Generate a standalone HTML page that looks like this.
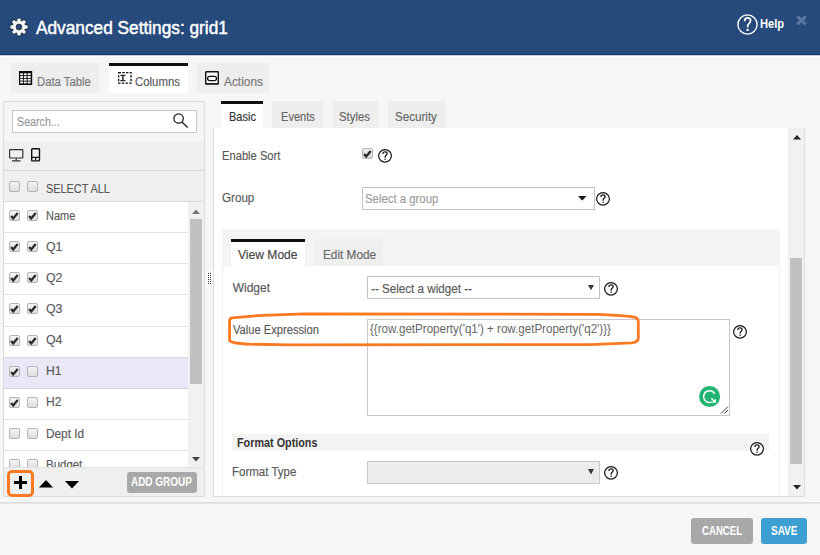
<!DOCTYPE html>
<html><head><meta charset="utf-8">
<style>
*{box-sizing:border-box;margin:0;padding:0}
html,body{width:820px;height:555px;overflow:hidden;background:#f6f6f6;font-family:"Liberation Sans",sans-serif;position:relative}
div{position:absolute}
.t{white-space:pre;-webkit-text-stroke:0.15px currentColor;transform-origin:0 0}
.tab{background:#eeeeee}
.tab.act{background:#fff;border-top:3px solid #111}
.cb{width:11px;height:11px;border:1px solid #b4b4b4;border-radius:2px;background:linear-gradient(#f4f4f4,#dedede)}
.row{left:4px;width:184px;height:31px;background:#fff;border-bottom:1px solid #e3e3e3}
svg{position:absolute;overflow:visible}

</style></head><body>
<!-- header -->
<div style="left:0;top:0;width:820px;height:54px;background:#264a7b"></div>
<div style="left:0;top:54px;width:820px;height:1px;background:#12366b"></div>
<div style="left:0;top:55px;width:820px;height:1px;background:#c9cfd8"></div>
<div style="left:0;top:56px;width:820px;height:1px;background:#fff"></div>
<!-- gear -->
<svg style="left:8.3px;top:17px" width="22" height="20" viewBox="0 0 22 20">
<g transform="translate(11,10)">
<g fill="#1c2a3c" stroke="#1c2a3c" stroke-width="1.4"><circle r="6.2"/><rect x="-1.7" y="-8.6" width="3.4" height="4" rx="1" transform="rotate(0)"/><rect x="-1.7" y="-8.6" width="3.4" height="4" rx="1" transform="rotate(45)"/><rect x="-1.7" y="-8.6" width="3.4" height="4" rx="1" transform="rotate(90)"/><rect x="-1.7" y="-8.6" width="3.4" height="4" rx="1" transform="rotate(135)"/><rect x="-1.7" y="-8.6" width="3.4" height="4" rx="1" transform="rotate(180)"/><rect x="-1.7" y="-8.6" width="3.4" height="4" rx="1" transform="rotate(225)"/><rect x="-1.7" y="-8.6" width="3.4" height="4" rx="1" transform="rotate(270)"/><rect x="-1.7" y="-8.6" width="3.4" height="4" rx="1" transform="rotate(315)"/></g>
<g fill="#fafafa"><circle r="6.2"/><rect x="-1.7" y="-8.6" width="3.4" height="4" rx="1" transform="rotate(0)"/><rect x="-1.7" y="-8.6" width="3.4" height="4" rx="1" transform="rotate(45)"/><rect x="-1.7" y="-8.6" width="3.4" height="4" rx="1" transform="rotate(90)"/><rect x="-1.7" y="-8.6" width="3.4" height="4" rx="1" transform="rotate(135)"/><rect x="-1.7" y="-8.6" width="3.4" height="4" rx="1" transform="rotate(180)"/><rect x="-1.7" y="-8.6" width="3.4" height="4" rx="1" transform="rotate(225)"/><rect x="-1.7" y="-8.6" width="3.4" height="4" rx="1" transform="rotate(270)"/><rect x="-1.7" y="-8.6" width="3.4" height="4" rx="1" transform="rotate(315)"/></g>
<circle r="2.9" fill="#264a7b" stroke="#333" stroke-width="0.9"/>
</g></svg>
<!-- help circle -->
<svg style="left:736.5px;top:13.5px" width="21" height="21" viewBox="0 0 21 21">
<circle cx="10.5" cy="10.5" r="9.6" fill="none" stroke="#fff" stroke-width="1.4"/>
<path d="M7.6 7.3C7.6 5.1 8.9 3.9 10.6 3.9C12.4 3.9 13.6 5.1 13.6 6.8C13.6 8.8 11 9.6 10.7 11.6L10.6 13.4" fill="none" stroke="#fff" stroke-width="1.7"/>
<circle cx="10.6" cy="15.9" r="1.2" fill="#fff"/>
</svg>
<!-- close x -->
<svg style="left:796px;top:15.4px" width="11" height="11" viewBox="0 0 11 11">
<path d="M1.3 1.3L9.7 9.4M9.7 1.3L1.3 9.4" stroke="#5a76a1" stroke-width="3" stroke-linecap="butt"/>
</svg>

<!-- top tabs -->
<div class="tab" style="left:11px;top:63px;width:88px;height:30px"></div>
<div class="tab act" style="left:109px;top:63px;width:79px;height:30px"></div>
<div class="tab" style="left:197px;top:63px;width:72px;height:30px"></div>
<!-- data table icon -->
<svg style="left:19px;top:71px" width="13.2" height="14" viewBox="0 0 13.2 14">
<rect x="0" y="0" width="13.2" height="14" fill="#0a0a0a"/>
<g fill="#fff"><rect x="1.2" y="2.3" width="2.7" height="1.85"/><rect x="4.85" y="2.3" width="2.8" height="1.85"/><rect x="8.6" y="2.3" width="3.1" height="1.85"/><rect x="1.2" y="5.05" width="2.7" height="1.85"/><rect x="4.85" y="5.05" width="2.8" height="1.85"/><rect x="8.6" y="5.05" width="3.1" height="1.85"/><rect x="1.2" y="7.8" width="2.7" height="1.85"/><rect x="4.85" y="7.8" width="2.8" height="1.85"/><rect x="8.6" y="7.8" width="3.1" height="1.85"/><rect x="1.2" y="10.55" width="2.7" height="1.85"/><rect x="4.85" y="10.55" width="2.8" height="1.85"/><rect x="8.6" y="10.55" width="3.1" height="1.85"/></g></svg>
<!-- columns icon -->
<svg style="left:117.6px;top:72px" width="14" height="12" viewBox="0 0 14 12">
<rect x="0.65" y="0.65" width="12.4" height="10.4" fill="none" stroke="#111" stroke-width="1.3" stroke-dasharray="2.4 1.3"/>
<path d="M2.4 3.3H7.4M2.4 8.6H7.4" stroke="#222" stroke-width="1.3" fill="none"/>
<path d="M4.9 3.3V8.6" stroke="#333" stroke-width="1.6" fill="none"/>
</svg>
<!-- actions icon -->
<svg style="left:205px;top:71px" width="14" height="14" viewBox="0 0 14 14">
<rect x="0.7" y="0.7" width="12.6" height="12.4" rx="0.6" fill="#fafafa" stroke="#111" stroke-width="1.4"/>
<path d="M0.7 12.6H13.3" stroke="#222" stroke-width="1.2"/>
<rect x="2.6" y="5.3" width="8.9" height="4.3" rx="2.1" fill="#fff" stroke="#111" stroke-width="1.25"/>
</svg>

<!-- left panel -->
<div style="left:3px;top:101px;width:202px;height:396px;border:1px solid #dcdcdc;background:#f5f5f5"></div>
<div style="left:12px;top:110px;width:185px;height:23px;background:#fff;border:1px solid #c8c8c8"></div>
<svg style="left:173px;top:113.4px" width="16" height="16" viewBox="0 0 16 16">
<circle cx="5.6" cy="5.5" r="4.7" fill="none" stroke="#222" stroke-width="1.3"/>
<path d="M8.9 8.9L14.6 14.5" stroke="#222" stroke-width="1.4"/>
</svg>
<div style="left:4px;top:141px;width:200px;height:30px;background:#efefef;border-bottom:1px solid #dcdcdc"></div>
<!-- monitor -->
<svg style="left:9px;top:148.8px" width="14.4" height="12.5" viewBox="0 0 14.4 12.5">
<rect x="0.6" y="0.6" width="13.2" height="8.4" rx="0.5" fill="none" stroke="#333" stroke-width="1.2"/>
<path d="M7.2 9V11.2M3 11.8H11.4" stroke="#333" stroke-width="1.2"/>
</svg>
<!-- phone -->
<svg style="left:31px;top:147.8px" width="9.2" height="13.6" viewBox="0 0 9.2 13.6">
<rect x="0.7" y="0.7" width="7.8" height="12.2" rx="0.6" fill="none" stroke="#111" stroke-width="1.4"/>
<path d="M0.7 9.4H8.5M4.6 9.4V12.6" stroke="#111" stroke-width="1.2"/>
</svg>
<div style="left:4px;top:171px;width:200px;height:31px;background:#efefef;border-bottom:1px solid #d8d8d8"></div>
<div class="cb" style="left:9px;top:180.5px"></div>
<div class="cb" style="left:27.3px;top:180.5px"></div>

<!-- list -->
<div class="row" style="top:202px;height:31px"></div>
<div class="row" style="top:233px;height:31px"></div>
<div class="row" style="top:264px;height:31px"></div>
<div class="row" style="top:295px;height:32px"></div>
<div class="row" style="top:327px;height:31px;border-bottom-color:#dcdce4"></div>
<div class="row" style="top:358px;height:31px;background:#e8e8f6;border-bottom-color:#d6d6e2"></div>
<div class="row" style="top:389px;height:31px"></div>
<div class="row" style="top:420px;height:31px"></div>
<div class="row" style="top:451px;height:16px;border-bottom:none"></div>
<div class="cb" style="left:9px;top:210px"></div>
<svg style="left:9px;top:210px" width="11" height="11" viewBox="0 0 11 11"><path d="M2.1 6.1L4.2 8.5L8.7 3" stroke="#2a2a2a" stroke-width="2.3" fill="none"/></svg>
<div class="cb" style="left:27.3px;top:210px"></div>
<svg style="left:27.3px;top:210px" width="11" height="11" viewBox="0 0 11 11"><path d="M2.1 6.1L4.2 8.5L8.7 3" stroke="#2a2a2a" stroke-width="2.3" fill="none"/></svg>
<div class="cb" style="left:9px;top:241px"></div>
<svg style="left:9px;top:241px" width="11" height="11" viewBox="0 0 11 11"><path d="M2.1 6.1L4.2 8.5L8.7 3" stroke="#2a2a2a" stroke-width="2.3" fill="none"/></svg>
<div class="cb" style="left:27.3px;top:241px"></div>
<svg style="left:27.3px;top:241px" width="11" height="11" viewBox="0 0 11 11"><path d="M2.1 6.1L4.2 8.5L8.7 3" stroke="#2a2a2a" stroke-width="2.3" fill="none"/></svg>
<div class="cb" style="left:9px;top:272px"></div>
<svg style="left:9px;top:272px" width="11" height="11" viewBox="0 0 11 11"><path d="M2.1 6.1L4.2 8.5L8.7 3" stroke="#2a2a2a" stroke-width="2.3" fill="none"/></svg>
<div class="cb" style="left:27.3px;top:272px"></div>
<svg style="left:27.3px;top:272px" width="11" height="11" viewBox="0 0 11 11"><path d="M2.1 6.1L4.2 8.5L8.7 3" stroke="#2a2a2a" stroke-width="2.3" fill="none"/></svg>
<div class="cb" style="left:9px;top:303px"></div>
<svg style="left:9px;top:303px" width="11" height="11" viewBox="0 0 11 11"><path d="M2.1 6.1L4.2 8.5L8.7 3" stroke="#2a2a2a" stroke-width="2.3" fill="none"/></svg>
<div class="cb" style="left:27.3px;top:303px"></div>
<svg style="left:27.3px;top:303px" width="11" height="11" viewBox="0 0 11 11"><path d="M2.1 6.1L4.2 8.5L8.7 3" stroke="#2a2a2a" stroke-width="2.3" fill="none"/></svg>
<div class="cb" style="left:9px;top:335px"></div>
<svg style="left:9px;top:335px" width="11" height="11" viewBox="0 0 11 11"><path d="M2.1 6.1L4.2 8.5L8.7 3" stroke="#2a2a2a" stroke-width="2.3" fill="none"/></svg>
<div class="cb" style="left:27.3px;top:335px"></div>
<svg style="left:27.3px;top:335px" width="11" height="11" viewBox="0 0 11 11"><path d="M2.1 6.1L4.2 8.5L8.7 3" stroke="#2a2a2a" stroke-width="2.3" fill="none"/></svg>
<div class="cb" style="left:9px;top:366px"></div>
<svg style="left:9px;top:366px" width="11" height="11" viewBox="0 0 11 11"><path d="M2.1 6.1L4.2 8.5L8.7 3" stroke="#2a2a2a" stroke-width="2.3" fill="none"/></svg>
<div class="cb" style="left:27.3px;top:366px"></div>
<div class="cb" style="left:9px;top:397px"></div>
<svg style="left:9px;top:397px" width="11" height="11" viewBox="0 0 11 11"><path d="M2.1 6.1L4.2 8.5L8.7 3" stroke="#2a2a2a" stroke-width="2.3" fill="none"/></svg>
<div class="cb" style="left:27.3px;top:397px"></div>
<div class="cb" style="left:9px;top:428px"></div>
<div class="cb" style="left:27.3px;top:428px"></div>
<div class="cb" style="left:9px;top:459px"></div>
<div class="cb" style="left:27.3px;top:459px"></div>
<!-- list scrollbar -->
<div style="left:188px;top:202px;width:16px;height:265px;background:#f1f1f1"></div>
<svg style="left:192px;top:208.5px" width="8" height="5" viewBox="0 0 8 5"><path d="M0 5L4 0.5L8 5Z" fill="#777"/></svg>
<div style="left:190px;top:219px;width:12px;height:165px;background:#c1c1c1"></div>
<svg style="left:192px;top:456.5px" width="8" height="5" viewBox="0 0 8 5"><path d="M0 0L4 4.5L8 0Z" fill="#444"/></svg>
<!-- bottom bar -->
<div style="z-index:5;left:4px;top:467px;width:200px;height:29px;background:#efefef;border-top:1px solid #e2e2e2"></div>
<div style="z-index:5;left:7px;top:469.5px;width:27px;height:27.5px;border:3px solid #fb7a21;border-radius:5px"></div>
<svg style="z-index:5;left:13.5px;top:476px" width="13" height="13" viewBox="0 0 13 13"><path d="M6.5 0V13M0 6.5H13" stroke="#000" stroke-width="3"/></svg>
<svg style="z-index:5;left:39px;top:480px" width="14" height="7.5" viewBox="0 0 14 7.5"><path d="M0 7.5L7 0L14 7.5Z" fill="#000"/></svg>
<svg style="z-index:5;left:65px;top:480.5px" width="14" height="7.5" viewBox="0 0 14 7.5"><path d="M0 0L7 7.5L14 0Z" fill="#000"/></svg>
<div style="z-index:5;left:127px;top:472px;width:69.5px;height:21px;background:#a9a9a9;border-radius:3px"></div>

<!-- splitter -->
<svg style="left:207px;top:271px" width="6" height="15" viewBox="0 0 6 15">
<rect width="6" height="15" fill="#fff"/>
<g fill="#333"><rect x="1" y="2" width="1" height="1"/><rect x="3" y="2" width="1" height="1"/>
<rect x="1" y="4" width="1" height="1"/><rect x="3" y="4" width="1" height="1"/>
<rect x="1" y="6" width="1" height="1"/><rect x="3" y="6" width="1" height="1"/>
<rect x="1" y="8" width="1" height="1"/><rect x="3" y="8" width="1" height="1"/>
<rect x="1" y="10" width="1" height="1"/><rect x="3" y="10" width="1" height="1"/>
<rect x="1" y="12" width="1" height="1"/><rect x="3" y="12" width="1" height="1"/></g>
</svg>

<!-- right tabs -->
<div class="tab act" style="left:221px;top:101px;width:41.5px;height:27px"></div>
<div class="tab" style="left:272px;top:101px;width:51px;height:27px"></div>
<div class="tab" style="left:333px;top:101px;width:45px;height:27px"></div>
<div class="tab" style="left:388px;top:101px;width:58px;height:27px"></div>

<!-- right panel -->
<div style="left:213px;top:128px;width:592px;height:369px;background:#fff;border-left:1px solid #dcdcdc;border-right:1px solid #dcdcdc;border-bottom:1px solid #dcdcdc"></div>
<div style="left:788px;top:128px;width:16px;height:368px;background:#f1f1f1"></div>
<svg style="left:792.5px;top:135px" width="8" height="4.5" viewBox="0 0 8 4.5"><path d="M0 4.5L4 0L8 4.5Z" fill="#222"/></svg>
<div style="left:790px;top:258px;width:12px;height:205.5px;background:#c1c1c1"></div>
<svg style="left:792.5px;top:485px" width="8" height="4.5" viewBox="0 0 8 4.5"><path d="M0 0L4 4.5L8 0Z" fill="#222"/></svg>

<!-- enable sort -->
<div class="cb" style="left:362px;top:148px;background:linear-gradient(#eee,#d6d6d6)"></div>
<svg style="left:362px;top:148px" width="11" height="11" viewBox="0 0 11 11"><path d="M2.1 6.1L4.2 8.5L8.7 3" stroke="#2a2a2a" stroke-width="2.3" fill="none"/></svg>
<svg style="left:378.0px;top:149.4px" width="14" height="14" viewBox="0 0 14 14"><ellipse cx="7" cy="6.85" rx="6.4" ry="6.25" fill="#fff" stroke="#1a1a1a" stroke-width="1.25"/><path d="M4.9 4.9C4.9 3.4 5.9 2.9 7 2.9C8.2 2.9 9.1 3.6 9.1 4.7C9.1 5.9 7.6 6.4 7.2 7.6L7.1 8.7" fill="none" stroke="#1a1a1a" stroke-width="1.3"/><circle cx="7.1" cy="10.2" r="0.8" fill="#1a1a1a"/></svg>
<!-- group select -->
<div style="left:362px;top:187px;width:233px;height:23px;border:1px solid #c4c4c4;background:#fff"></div>
<svg style="left:578px;top:196px" width="8.5" height="4.5" viewBox="0 0 8.5 4.5"><path d="M0 0L8.5 0L4.6 4.3Q4.25 4.6 3.9 4.3Z" fill="#1a1a1a"/></svg>
<svg style="left:596.1px;top:192.2px" width="14" height="14" viewBox="0 0 14 14"><ellipse cx="7" cy="6.85" rx="6.4" ry="6.25" fill="#fff" stroke="#1a1a1a" stroke-width="1.25"/><path d="M4.9 4.9C4.9 3.4 5.9 2.9 7 2.9C8.2 2.9 9.1 3.6 9.1 4.7C9.1 5.9 7.6 6.4 7.2 7.6L7.1 8.7" fill="none" stroke="#1a1a1a" stroke-width="1.3"/><circle cx="7.1" cy="10.2" r="0.8" fill="#1a1a1a"/></svg>

<!-- inner section -->
<div style="left:222px;top:229px;width:558px;height:267px;border-left:1px solid #f0f0f0;border-right:1px solid #f0f0f0;background:#fff"></div>
<div style="left:222px;top:229px;width:558px;height:37px;background:#f4f4f4"></div>
<div class="tab act" style="left:231px;top:239px;width:74px;height:27px"></div>
<div class="tab" style="left:315px;top:239px;width:68px;height:27px;background:#efefef"></div>

<!-- widget select -->
<div style="left:367px;top:276px;width:233px;height:23px;border:1px solid #c4c4c4;background:#fff"></div>
<svg style="left:587.5px;top:284.8px" width="6" height="5.2" viewBox="0 0 6 5.2"><path d="M0 0L3 5.2L6 0Z" fill="#3a3a3a"/></svg>
<svg style="left:604.0px;top:281.8px" width="14" height="14" viewBox="0 0 14 14"><ellipse cx="7" cy="6.85" rx="6.4" ry="6.25" fill="#fff" stroke="#1a1a1a" stroke-width="1.25"/><path d="M4.9 4.9C4.9 3.4 5.9 2.9 7 2.9C8.2 2.9 9.1 3.6 9.1 4.7C9.1 5.9 7.6 6.4 7.2 7.6L7.1 8.7" fill="none" stroke="#1a1a1a" stroke-width="1.3"/><circle cx="7.1" cy="10.2" r="0.8" fill="#1a1a1a"/></svg>

<!-- textarea -->
<div style="left:367px;top:319px;width:362.5px;height:96.5px;border:1px solid #c8c8c8;background:#fff"></div>
<svg style="left:720px;top:405px" width="9" height="9" viewBox="0 0 9 9"><path d="M1 8.5L8 1.5M4.5 8.5L8 5" stroke="#444" stroke-width="1"/></svg>
<svg style="left:699px;top:386px" width="21" height="21" viewBox="0 0 21 21">
<circle cx="10.6" cy="10.5" r="10.5" fill="#20b472"/>
<path d="M15.8 8A5.9 5.9 0 1 0 13.2 15.8" stroke="#fff" stroke-width="1.5" fill="none"/>
<path d="M12.3 12.3L15.6 15.6" stroke="#fff" stroke-width="1.4"/>
<path d="M16.9 16.7L16.9 12.6L12.8 16.7Z" fill="#fff"/>
</svg>
<svg style="left:733.2px;top:324.5px" width="14" height="14" viewBox="0 0 14 14"><ellipse cx="7" cy="6.85" rx="6.4" ry="6.25" fill="#fff" stroke="#1a1a1a" stroke-width="1.25"/><path d="M4.9 4.9C4.9 3.4 5.9 2.9 7 2.9C8.2 2.9 9.1 3.6 9.1 4.7C9.1 5.9 7.6 6.4 7.2 7.6L7.1 8.7" fill="none" stroke="#1a1a1a" stroke-width="1.3"/><circle cx="7.1" cy="10.2" r="0.8" fill="#1a1a1a"/></svg>

<!-- format options -->
<div style="left:232px;top:434px;width:537px;height:16.5px;background:#f3f3f3"></div>
<svg style="left:749.8px;top:442.0px" width="14" height="14" viewBox="0 0 14 14"><ellipse cx="7" cy="6.85" rx="6.4" ry="6.25" fill="#fff" stroke="#1a1a1a" stroke-width="1.25"/><path d="M4.9 4.9C4.9 3.4 5.9 2.9 7 2.9C8.2 2.9 9.1 3.6 9.1 4.7C9.1 5.9 7.6 6.4 7.2 7.6L7.1 8.7" fill="none" stroke="#1a1a1a" stroke-width="1.3"/><circle cx="7.1" cy="10.2" r="0.8" fill="#1a1a1a"/></svg>
<div style="left:367px;top:461px;width:233px;height:23px;border:1px solid #c8c8c8;background:#ececec"></div>
<svg style="left:587.5px;top:469px" width="6" height="5.5" viewBox="0 0 6 5.5"><path d="M0 0L3 5.5L6 0Z" fill="#3a3a3a"/></svg>
<svg style="left:604.0px;top:466.1px" width="14" height="14" viewBox="0 0 14 14"><ellipse cx="7" cy="6.85" rx="6.4" ry="6.25" fill="#fff" stroke="#1a1a1a" stroke-width="1.25"/><path d="M4.9 4.9C4.9 3.4 5.9 2.9 7 2.9C8.2 2.9 9.1 3.6 9.1 4.7C9.1 5.9 7.6 6.4 7.2 7.6L7.1 8.7" fill="none" stroke="#1a1a1a" stroke-width="1.3"/><circle cx="7.1" cy="10.2" r="0.8" fill="#1a1a1a"/></svg>

<!-- orange ellipse -->
<svg style="left:0;top:0" width="820" height="555" viewBox="0 0 820 555">
<path d="M229.6 340.5L229.6 320.5Q229.6 318.3 232 317.8L262 315.3L305 313.8L596 314.3Q630 315.5 635.5 317.5Q638.3 318.8 638.3 322L638.3 338.5Q638.3 342 632 342.8L590 344.6L290 344.9L250 344.2Q231 343.3 229.6 340.5Z" fill="none" stroke="#fb7a21" stroke-width="2.8" stroke-linejoin="round"/>
</svg>

<!-- footer -->
<div style="left:0;top:501px;width:820px;height:1px;background:#fafafa"></div>
<div style="left:0;top:502px;width:820px;height:1px;background:#dcdcdc"></div>
<div style="left:0;top:503px;width:820px;height:1px;background:#e6e6e6"></div>
<div style="left:691px;top:518px;width:62px;height:26px;background:#a8a8a8;border-radius:3px"></div>
<div style="left:760.5px;top:518px;width:46.5px;height:26px;background:#3d9fd2;border-radius:3px"></div>

<div class=t style="left:36.4px;top:17px;font-size:18px;line-height:22px;font-weight:normal;color:#fff;transform:scaleX(0.9587);-webkit-text-stroke:0.45px #fff;">Advanced Settings: grid1</div>
<div class=t style="left:759.8px;top:16px;font-size:12.5px;line-height:16px;font-weight:bold;color:#fff;transform:scaleX(0.8929);-webkit-text-stroke:0;">Help</div>
<div class=t style="left:37.1px;top:75px;font-size:12px;line-height:15px;font-weight:normal;color:#777;transform:scaleX(0.9431);">Data Table</div>
<div class=t style="left:134.9px;top:75px;font-size:12px;line-height:15px;font-weight:normal;color:#595959;transform:scaleX(0.9483);">Columns</div>
<div class=t style="left:223.5px;top:75px;font-size:12px;line-height:15px;font-weight:normal;color:#777;transform:scaleX(0.9896);">Actions</div>
<div class=t style="left:16.6px;top:115px;font-size:12px;line-height:15px;font-weight:normal;color:#999;transform:scaleX(0.8923);">Search...</div>
<div class=t style="left:45.7px;top:182px;font-size:12px;line-height:15px;font-weight:normal;color:#595959;transform:scaleX(0.9060);">SELECT ALL</div>
<div class=t style="left:46.0px;top:209px;font-size:12px;line-height:15px;font-weight:normal;color:#595959;transform:scaleX(0.9145);">Name</div>
<div class=t style="left:46.0px;top:240px;font-size:12px;line-height:15px;font-weight:normal;color:#595959;transform:scaleX(1.0295);">Q1</div>
<div class=t style="left:46.0px;top:271px;font-size:12px;line-height:15px;font-weight:normal;color:#595959;transform:scaleX(1.0295);">Q2</div>
<div class=t style="left:46.0px;top:302px;font-size:12px;line-height:15px;font-weight:normal;color:#595959;transform:scaleX(1.0295);">Q3</div>
<div class=t style="left:46.0px;top:333px;font-size:12px;line-height:15px;font-weight:normal;color:#595959;transform:scaleX(1.0295);">Q4</div>
<div class=t style="left:46.0px;top:364px;font-size:12px;line-height:15px;font-weight:normal;color:#595959;transform:scaleX(1.0081);">H1</div>
<div class=t style="left:46.0px;top:395px;font-size:12px;line-height:15px;font-weight:normal;color:#595959;transform:scaleX(1.0081);">H2</div>
<div class=t style="left:46.0px;top:427px;font-size:12px;line-height:15px;font-weight:normal;color:#595959;transform:scaleX(0.9856);">Dept Id</div>
<div class=t style="left:46.0px;top:458px;font-size:12px;line-height:15px;font-weight:normal;color:#595959;transform:scaleX(0.9545);">Budget</div>
<div class=t style="left:131.0px;top:475px;font-size:12px;line-height:15px;font-weight:bold;color:#fff;transform:scaleX(0.8289);-webkit-text-stroke:0;z-index:6;">ADD GROUP</div>
<div class=t style="left:229.3px;top:110px;font-size:12px;line-height:15px;font-weight:normal;color:#333;transform:scaleX(0.9160);">Basic</div>
<div class=t style="left:280.6px;top:110px;font-size:12px;line-height:15px;font-weight:normal;color:#666;transform:scaleX(0.9237);">Events</div>
<div class=t style="left:339.3px;top:110px;font-size:12px;line-height:15px;font-weight:normal;color:#666;transform:scaleX(0.9456);">Styles</div>
<div class=t style="left:394.8px;top:110px;font-size:12px;line-height:15px;font-weight:normal;color:#666;transform:scaleX(0.9670);">Security</div>
<div class=t style="left:222.3px;top:149px;font-size:12px;line-height:15px;font-weight:normal;color:#595959;transform:scaleX(0.9310);">Enable Sort</div>
<div class=t style="left:221.6px;top:191px;font-size:12px;line-height:15px;font-weight:normal;color:#595959;transform:scaleX(0.9692);">Group</div>
<div class=t style="left:365.0px;top:192px;font-size:12px;line-height:15px;font-weight:normal;color:#9c9c9c;transform:scaleX(0.9473);">Select a group</div>
<div class=t style="left:238.0px;top:248px;font-size:12px;line-height:15px;font-weight:normal;color:#444;transform:scaleX(1.0069);">View Mode</div>
<div class=t style="left:323.3px;top:248px;font-size:12px;line-height:15px;font-weight:normal;color:#666;transform:scaleX(0.9836);">Edit Mode</div>
<div class=t style="left:232.7px;top:281px;font-size:12px;line-height:15px;font-weight:normal;color:#595959;">Widget</div>
<div class=t style="left:371.3px;top:282px;font-size:12px;line-height:15px;font-weight:normal;color:#595959;transform:scaleX(0.9701);">-- Select a widget --</div>
<div class=t style="left:232.5px;top:323px;font-size:12px;line-height:15px;font-weight:normal;color:#595959;transform:scaleX(0.9286);">Value Expression</div>
<div class=t style="left:370.3px;top:322px;font-size:12px;line-height:15px;font-weight:normal;color:#666;transform:scaleX(0.9651);-webkit-text-stroke:0;">{{row.getProperty('q1') + row.getProperty('q2')}}</div>
<div class=t style="left:236.9px;top:436px;font-size:12px;line-height:15px;font-weight:bold;color:#333;transform:scaleX(0.9006);-webkit-text-stroke:0;">Format Options</div>
<div class=t style="left:232.0px;top:465px;font-size:12px;line-height:15px;font-weight:normal;color:#595959;transform:scaleX(0.9580);">Format Type</div>
<div class=t style="left:701.5px;top:524px;font-size:12px;line-height:15px;font-weight:bold;color:#fff;transform:scaleX(0.8014);-webkit-text-stroke:0;">CANCEL</div>
<div class=t style="left:771.2px;top:524px;font-size:12px;line-height:15px;font-weight:bold;color:#fff;transform:scaleX(0.8302);-webkit-text-stroke:0;">SAVE</div>
</body></html>
